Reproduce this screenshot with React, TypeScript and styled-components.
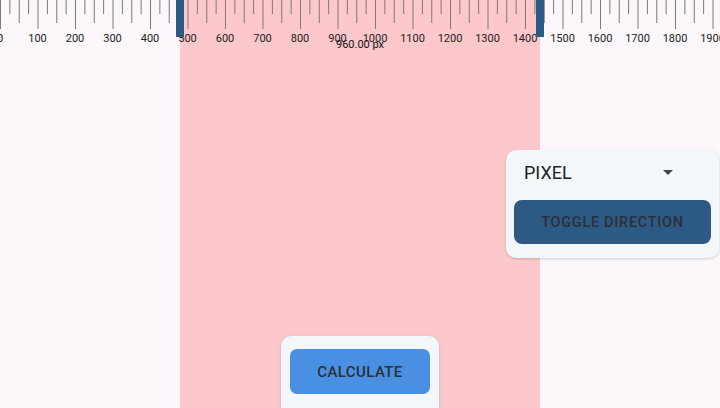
import styled, { createGlobalStyle } from "styled-components";

const GlobalStyle = createGlobalStyle`
  html, body {
    margin: 0;
    padding: 0;
    background: #fcf7fb;
    font-family: Roboto, "Noto Sans", sans-serif;
  }
`;

// ruler scale: 100 units -> 37.5px
const PX_PER_UNIT = 0.375;
const RANGE_START = 480;
const RANGE_END = 1440;

// every layer shares the single grid cell, so they stack
const Stage = styled.div`
  display: grid;
  grid-template: 408px / 720px;
  overflow: hidden;
  background: #fcf7fb;
  & > * {
    grid-area: 1 / 1;
  }
`;

const RangeLayer = styled.div`
  display: flex;
`;

const Range = styled.div`
  background: #fcc8cb;
`;

const RulerLayer = styled.div`
  position: relative;
  align-self: start;
  height: 50px;
`;

const Handle = styled.div`
  position: absolute;
  top: 0;
  width: 8px;
  height: 37px;
  background: #2c5a85;
`;

const RangeLabel = styled.div`
  position: absolute;
  top: 38px;
  transform: translateX(-50%);
  font-size: 11px;
  color: #111;
  white-space: nowrap;
`;

const Card = styled.div`
  background: #f3f7f9;
  border-radius: 10px;
  box-shadow: 0 1px 3px rgba(0, 0, 0, 0.18);
  box-sizing: border-box;
`;

const SettingsCard = styled(Card)`
  justify-self: end;
  align-self: center;
  margin-right: 1px;
  width: 213px;
  padding: 0 8px 14px 8px;
  display: flex;
  flex-direction: column;
  gap: 6px;
`;

const SelectRow = styled.div`
  height: 44px;
  display: flex;
  align-items: center;
  justify-content: space-between;
  padding: 0 38px 0 10px;
  font-size: 18px;
  color: #1f1f1f;
`;

const Caret = styled.span`
  width: 0;
  height: 0;
  border-left: 5px solid transparent;
  border-right: 5px solid transparent;
  border-top: 5px solid #444;
  margin-top: 1px;
`;

const ActionButton = styled.button<{ $bg: string }>`
  border: none;
  background: ${(p) => p.$bg};
  color: #2b2f36;
  font-family: Roboto, "Noto Sans", sans-serif;
  font-weight: 500;
  display: flex;
  align-items: center;
  justify-content: center;
  cursor: pointer;
`;

const ToggleButton = styled(ActionButton)`
  height: 44px;
  border-radius: 8px;
  font-size: 14.5px;
  letter-spacing: 0.7px;
`;

const CalcCard = styled(Card)`
  justify-self: center;
  align-self: end;
  margin-bottom: -18px;
  width: 158px;
  height: 90px;
  padding: 13px 9px;
`;

const CalcButton = styled(ActionButton)`
  width: 140px;
  height: 45px;
  border-radius: 7px;
  font-size: 15px;
  letter-spacing: 0.4px;
`;

function Ruler() {
  const ticks = [];
  for (let v = 0; v <= 2000; v += 25) {
    const x = v * PX_PER_UNIT + 0.5;
    const len = v % 100 === 0 ? 29 : v % 50 === 0 ? 23 : 14;
    ticks.push(
      <line key={`t${v}`} x1={x} x2={x} y1={0} y2={len} stroke="#7a7a7a" strokeWidth={1} />
    );
    if (v % 100 === 0) {
      ticks.push(
        <text
          key={`l${v}`}
          x={v * PX_PER_UNIT}
          y={42}
          textAnchor="middle"
          fontSize={11}
          fontFamily="Roboto, sans-serif"
          fill="#222"
        >
          {v}
        </text>
      );
    }
  }
  return (
    <svg width={720} height={50} style={{ display: "block" }}>
      {ticks}
    </svg>
  );
}

export default function App() {
  const left = RANGE_START * PX_PER_UNIT;
  const right = RANGE_END * PX_PER_UNIT;
  return (
    <>
      <GlobalStyle />
      <Stage>
        <RangeLayer>
          <Range style={{ marginLeft: left, width: right - left }} />
        </RangeLayer>
        <RulerLayer>
          <Ruler />
          <Handle style={{ left: left - 4 }} />
          <Handle style={{ left: right - 4 }} />
          <RangeLabel style={{ left: (left + right) / 2 }}>
            {(RANGE_END - RANGE_START).toFixed(2)} px
          </RangeLabel>
        </RulerLayer>
        <SettingsCard>
          <SelectRow>
            PIXEL
            <Caret />
          </SelectRow>
          <ToggleButton $bg="#2c5a85">TOGGLE DIRECTION</ToggleButton>
        </SettingsCard>
        <CalcCard>
          <CalcButton $bg="#4a90e2">CALCULATE</CalcButton>
        </CalcCard>
      </Stage>
    </>
  );
}
